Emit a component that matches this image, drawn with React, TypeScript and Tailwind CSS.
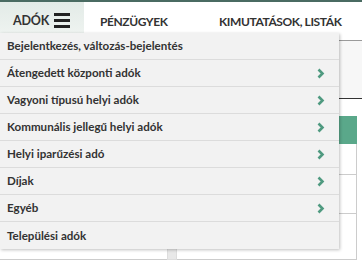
import React from "react";

const Chevron = () => (
  <svg width="8" height="11" viewBox="0 0 8 11" className="shrink-0">
    <path d="M1.5 1.5 L5.5 5.5 L1.5 9.5" fill="none" stroke="#4f9a80" strokeWidth="2.6" strokeLinecap="butt" strokeLinejoin="miter" />
  </svg>
);

const items: { label: string; sub: boolean }[] = [
  { label: "Bejelentkezés, változás-bejelentés", sub: false },
  { label: "Átengedett központi adók", sub: true },
  { label: "Vagyoni típusú helyi adók", sub: true },
  { label: "Kommunális jellegű helyi adók", sub: true },
  { label: "Helyi iparűzési adó", sub: true },
  { label: "Díjak", sub: true },
  { label: "Egyéb", sub: true },
  { label: "Települési adók", sub: false },
];

export default function App() {
  return (
    <div
      className="relative w-[362px] h-[262px] overflow-hidden bg-white text-[#333]"
      style={{ fontFamily: 'Lato, "Liberation Sans", sans-serif' }}
    >
      {/* nav */}
      <div className="flex h-[33px] whitespace-nowrap border-t-[2px] border-[#4a6b62] bg-white">
        <div className="flex w-[84px] shrink-0 items-center gap-[5px] bg-gradient-to-b from-[#e3ebe7] to-[#eef3f0] pl-[13px] pt-[5px]">
          <span className="mt-[3px] text-[12.5px] font-bold tracking-[-0.2px]">ADÓK</span>
          <div className="flex flex-col gap-[3px]">
            <div className="h-[3px] w-[16px] bg-[#222]" />
            <div className="h-[3px] w-[16px] bg-[#222]" />
            <div className="h-[3px] w-[16px] bg-[#222]" />
          </div>
        </div>
        <div className="flex w-[119px] shrink-0 items-center pl-[16px] pt-[8px] text-[12px] font-bold tracking-[-0.4px]">PÉNZÜGYEK</div>
        <div className="flex shrink-0 items-center pl-[16px] pt-[8px] text-[12px] font-bold tracking-[-0.4px]">KIMUTATÁSOK, LISTÁK</div>
      </div>

      {/* page content behind */}
      <div className="flex flex-col">
        <div className="h-[7px] bg-white" />
        <div className="h-[1px] bg-[#9a9a9a]" />
        <div className="h-[57px] bg-[#f7f7f7]" />
        <div className="h-[1px] bg-[#333]" />
        <div className="h-[17px] bg-white" />
        <div className="flex h-[144px]">
          <div className="w-[167px] border-b border-[#ccc]" />
          <div className="w-[10px] border-b border-x border-[#ddd] bg-[#e8e8e8]" />
          <div className="flex flex-1 flex-col">
            <div className="mr-[5px] h-[28px] bg-[#5aa88a]" />
            <div className="mr-[5px] h-[116px] border-r border-b border-[#ccc] bg-white">
              <div className="h-[31px] border-b border-[#ccc]" />
              <div className="h-[39px] border-b border-[#ccc]" />
            </div>
          </div>
        </div>
      </div>

      {/* dropdown */}
      <div className="absolute left-0 top-[33px] w-[339px] bg-[#f2f2f2] shadow-[1px_1px_3px_rgba(0,0,0,0.25)]">
        {items.map((it, i) => (
          <div
            key={it.label}
            className={`flex h-[27px] items-center justify-between pl-[7px] pr-[14px] ${i < items.length - 1 ? "border-b border-[#dcdcdc]" : ""}`}
          >
            <span className="text-[11.6px] font-bold">{it.label}</span>
            {it.sub && <Chevron />}
          </div>
        ))}
      </div>
    </div>
  );
}
